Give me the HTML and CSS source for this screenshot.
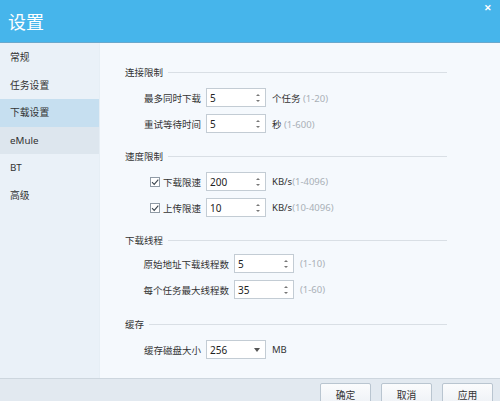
FILE: index.html
```html
<!DOCTYPE html>
<html lang="zh">
<head>
<meta charset="utf-8">
<title>设置</title>
<link rel="stylesheet" href="styles.css">
</head>
<body>
<div class="window">
  <header class="titlebar">
    <span class="title">设置</span>
    <span class="close">✕</span>
  </header>
  <div class="main">
    <nav class="sidebar">
      <div class="nav-item">常规</div>
      <div class="nav-item">任务设置</div>
      <div class="nav-item active">下载设置</div>
      <div class="nav-item hover">eMule</div>
      <div class="nav-item">BT</div>
      <div class="nav-item">高级</div>
    </nav>
    <section class="content">
      <div class="group">
        <div class="group-head"><span>连接限制</span><i class="rule"></i></div>
        <div class="rows">
          <span class="label">最多同时下载</span>
          <span class="spin"><span class="val">5</span><span class="arrows"><b class="up"></b><b class="down"></b></span></span>
          <span class="unit">个任务 <em>(1-20)</em></span>
          <span class="label">重试等待时间</span>
          <span class="spin"><span class="val">5</span><span class="arrows"><b class="up"></b><b class="down"></b></span></span>
          <span class="unit">秒 <em>(1-600)</em></span>
        </div>
      </div>
      <div class="group">
        <div class="group-head"><span>速度限制</span><i class="rule"></i></div>
        <div class="rows">
          <span class="label"><span class="check"><svg viewBox="0 0 10 10" width="10" height="10"><path d="M2 5.2 L4.2 7.4 L8.3 2.6" fill="none" stroke="#3b4650" stroke-width="1.1"/></svg></span>下载限速</span>
          <span class="spin"><span class="val">200</span><span class="arrows"><b class="up"></b><b class="down"></b></span></span>
          <span class="unit">KB/s<em>(1-4096)</em></span>
          <span class="label"><span class="check"><svg viewBox="0 0 10 10" width="10" height="10"><path d="M2 5.2 L4.2 7.4 L8.3 2.6" fill="none" stroke="#3b4650" stroke-width="1.1"/></svg></span>上传限速</span>
          <span class="spin"><span class="val">10</span><span class="arrows"><b class="up"></b><b class="down"></b></span></span>
          <span class="unit">KB/s<em>(10-4096)</em></span>
        </div>
      </div>
      <div class="group">
        <div class="group-head tight"><span>下载线程</span><i class="rule"></i></div>
        <div class="rows wide">
          <span class="label">原始地址下载线程数</span>
          <span class="spin"><span class="val">5</span><span class="arrows"><b class="up"></b><b class="down"></b></span></span>
          <span class="unit"><em>(1-10)</em></span>
          <span class="label">每个任务最大线程数</span>
          <span class="spin"><span class="val">35</span><span class="arrows"><b class="up"></b><b class="down"></b></span></span>
          <span class="unit"><em>(1-60)</em></span>
        </div>
      </div>
      <div class="group">
        <div class="group-head"><span>缓存</span><i class="rule"></i></div>
        <div class="rows">
          <span class="label">缓存磁盘大小</span>
          <span class="spin select"><span class="val">256</span><span class="caret"></span></span>
          <span class="unit">MB</span>
        </div>
      </div>
    </section>
  </div>
  <footer class="footer">
    <button class="btn">确定</button>
    <button class="btn">取消</button>
    <button class="btn">应用</button>
  </footer>
</div>
</body>
</html>
```

FILE: styles.css
```css
* { box-sizing: border-box; }
html, body { margin: 0; padding: 0; }
body {
  width: 500px;
  height: 401px;
  overflow: hidden;
  font-family: "Noto Sans", "Noto Sans CJK SC", sans-serif;
  font-size: 9.5px;
  color: #333;
  background: #f4f8fc;
}
.window {
  display: flex;
  flex-direction: column;
  height: 401px;
}
.titlebar {
  height: 43px;
  flex: none;
  background: #46b5eb;
  border-bottom: 1px solid #6aa8cc;
  display: flex;
  align-items: flex-start;
  justify-content: space-between;
  padding: 10px 8px 0 8px;
}
.title {
  font-family: "Noto Sans CJK SC", sans-serif;
  font-size: 18px;
  line-height: 22px;
  color: #fff;
}
.close {
  color: #fff;
  font-size: 9px;
  line-height: 9px;
  margin-top: -7px;
  margin-right: 0;
  font-weight: bold;
}
.main {
  flex: 1;
  display: flex;
  min-height: 0;
}
.sidebar {
  width: 100px;
  flex: none;
  background: #eaf1f8;
  border-right: 1px solid #e6eef5;
  padding-top: 1px;
}
.nav-item {
  height: 27.5px;
  line-height: 27.5px;
  padding-left: 10px;
  font-size: 9.8px;
  color: #333;
}
.nav-item.active { background: #c6dff0; }
.nav-item.hover { background: #dde6ee; }
.content {
  flex: 1;
  padding: 21px 53px 0 25px;
  background: #f5f9fd;
}
.group { margin-bottom: 15px; }
.group:nth-child(3) { margin-bottom: 17px; }
.group-head {
  display: flex;
  align-items: center;
  height: 16px;
  margin-bottom: 8px;
  color: #333;
}
.group-head.tight { margin-bottom: 6px; }
.group-head span { margin-right: 5px; white-space: nowrap; }
.rule {
  flex: 1;
  height: 1px;
  background: #d9dfe5;
}
.rows {
  display: grid;
  grid-template-columns: 56px 60px auto;
  column-gap: 5px;
  row-gap: 7px;
  padding-left: 20px;
  align-items: center;
}
.rows.wide { grid-template-columns: 84px 60px auto; }
.label {
  justify-self: end;
  white-space: nowrap;
  display: flex;
  align-items: center;
}
.check {
  width: 10px;
  height: 10px;
  border: 1px solid #8f9aa5;
  background: #fff;
  margin-right: 3px;
  display: flex;
  align-items: center;
  justify-content: center;
}
.check svg { display: block; flex: none; }
.spin {
  height: 19px;
  border: 1px solid #c3ccd4;
  background: #fff;
  display: flex;
  align-items: center;
}
.val {
  flex: 1;
  padding-left: 3px;
  font-size: 10px;
  color: #222;
}
.arrows {
  width: 14px;
  display: flex;
  flex-direction: column;
  align-items: center;
  gap: 4px;
}
.arrows b {
  display: block;
  width: 0;
  height: 0;
  border-left: 2px solid transparent;
  border-right: 2px solid transparent;
}
.arrows .up { border-bottom: 2.5px solid #777; }
.arrows .down { border-top: 2.5px solid #777; }
.caret {
  width: 16px;
  display: flex;
  justify-content: center;
}
.caret::before {
  content: "";
  width: 0;
  height: 0;
  border-left: 3px solid transparent;
  border-right: 3px solid transparent;
  border-top: 4px solid #555;
}
.unit {
  padding-left: 1px;
  white-space: nowrap;
  color: #333;
}
.unit em {
  font-style: normal;
  color: #a9b0b7;
}
.footer {
  height: 23px;
  flex: none;
  background: #e2e9f0;
  border-top: 1px solid #cdd6de;
  display: flex;
  justify-content: flex-end;
  align-items: flex-start;
  gap: 10px;
  padding: 4px 7px 0 0;
}
.btn {
  width: 51px;
  height: 22px;
  border: 1px solid #b9c5d0;
  border-radius: 2px;
  background: linear-gradient(#fbfcfd, #eef2f6);
  font-family: "Noto Sans CJK SC", sans-serif;
  font-size: 9.8px;
  color: #333;
  padding: 0;
  line-height: 18px;
  display: flex;
  justify-content: center;
  align-items: flex-start;
  padding-top: 2px;
}
```
